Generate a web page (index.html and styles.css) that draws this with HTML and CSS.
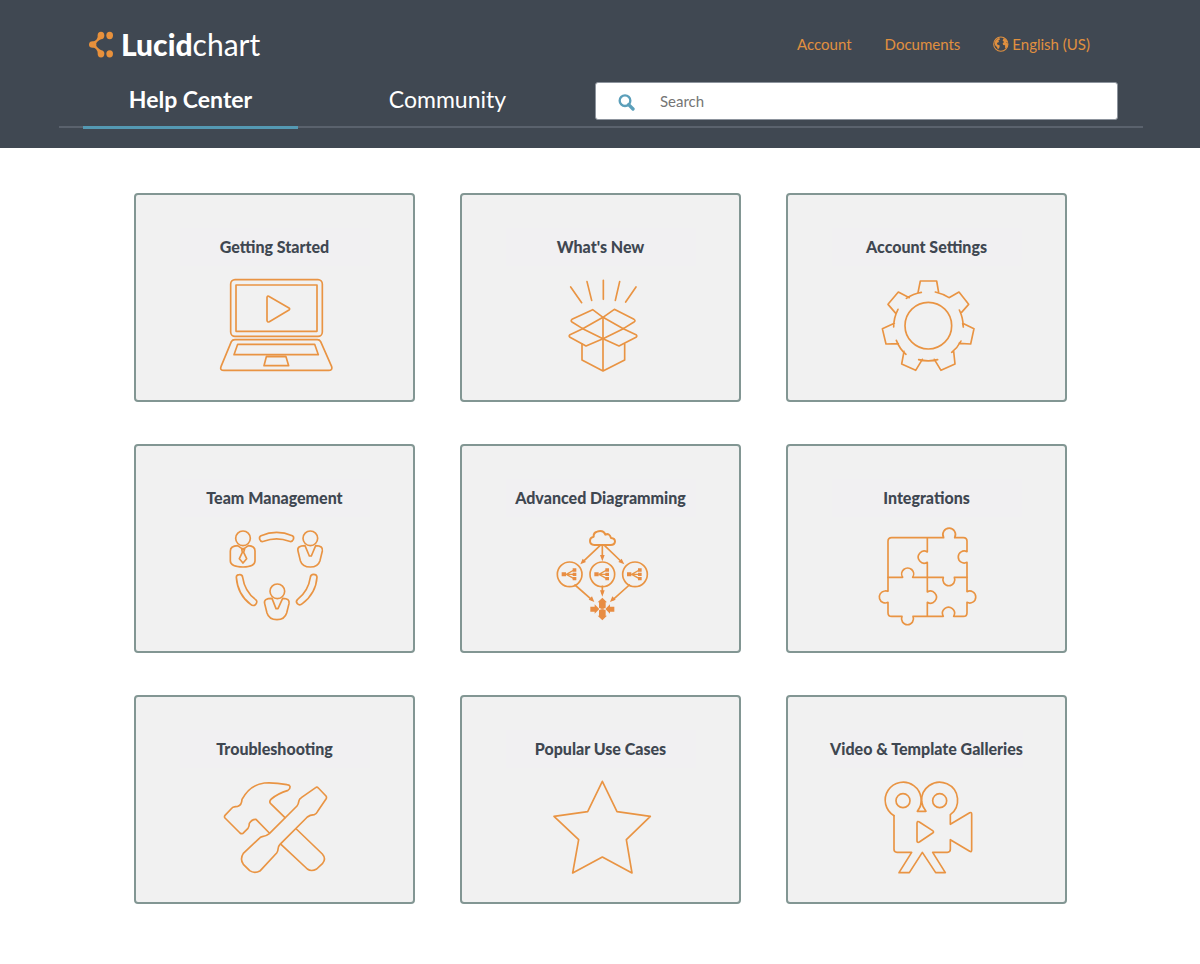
FILE: index.html
```html
<!DOCTYPE html>
<html lang="en">
<head>
	<meta charset="UTF-8">
	<meta name="viewport" content="width=device-width, initial-scale=1">
	<title>Lucidchart Help Center</title>
	<link rel="stylesheet" href="styles.css">
</head>
<body>
	<header class="header">
		<div class="topbar">
			<a class="logo" href="#">
				<svg class="logo-mark" viewBox="0 0 72 80" aria-hidden="true">
					<ellipse cx="36" cy="13" rx="10" ry="11"/>
					<ellipse cx="62" cy="13" rx="10" ry="11"/>
					<ellipse cx="36" cy="68" rx="10" ry="11"/>
					<ellipse cx="62" cy="68" rx="10" ry="11"/>
					<ellipse cx="11" cy="40" rx="11" ry="10"/>
					<path d="M13 31Q24 29 27 14L38 23Q24 30 20 40Q24 51 38 58L27 67Q24 52 13 49Z"/>
				</svg>
				<span class="logo-text"><b>Lucid</b>chart</span>
			</a>
			<div class="links">
				<a href="#">Account</a>
				<a href="#">Documents</a>
				<button class="lang" type="button">
					<svg class="globe" viewBox="0 0 45 45" aria-hidden="true">
						<circle cx="22" cy="23" r="20" fill="none" stroke="currentColor" stroke-width="3"/>
						<path d="M4 19L8 11L17 5L20 9L15 13L17 17L12 19L11 23L19 27L18 32L14 38L11 31L6 26Z"/>
						<path d="M30 6L37 10L41 17L37 18L42 22L41 30L36 35L34 33L34 26L29 25L27 21L31 17L27 13Z"/>
					</svg>
					English (US)
				</button>
			</div>
		</div>
		<div class="navbar">
			<nav class="tabs">
				<a class="tab active" href="#">Help Center</a>
				<a class="tab" href="#">Community</a>
			</nav>
			<form class="search">
				<label for="query" aria-label="Search">
					<svg class="search-icon" viewBox="0 0 51 51" aria-hidden="true">
						<circle cx="21" cy="20" r="16" fill="none" stroke="currentColor" stroke-width="7"/>
						<path d="M32 32L45 45" stroke="currentColor" stroke-width="10" stroke-linecap="round"/>
					</svg>
				</label>
				<input type="search" id="query" placeholder="Search">
			</form>
		</div>
	</header>

	<main class="grid">
		<a class="tile" href="#">
			<h2>Getting Started</h2>
			<svg class="icon" viewBox="252 270 363 312" aria-hidden="true">
				<rect x="302" y="284" width="275" height="170" rx="13"/>
				<rect x="318" y="300" width="243" height="139"/>
				<path d="M411 337Q412 332 416 334L477 369Q481 372 477 375L418 410Q412 413 411 406Z"/>
				<path d="M315 464H562Q569 464 572 470L605 545Q608 556 596 556H282Q269 556 273 545L304 470Q307 464 315 464Z"/>
				<path d="M323 478H554L565 509H312ZM409 515H468L476 542H402Z"/>
			</svg>
		</a>
		<a class="tile" href="#">
			<h2>What's New</h2>
			<svg class="icon" viewBox="0 135 363 312" aria-hidden="true">
				<path d="M92 171L125 218M141 155L155 211M190 151V208M239 155L226 211M288 171L257 216"/>
				<path d="M189 262L158 239L96 268Q91 272 96 276L128 296L189 262L223 238L282 268Q288 272 282 276L250 296Z"/>
				<path d="M128 296L90 314Q85 318 90 322L138 348L189 326L237 348L288 322Q293 318 288 314L250 296M128 296L189 326L250 296"/>
				<path d="M189 262V422M126 342V390L189 423L254 390V342"/>
			</svg>
		</a>
		<a class="tile" href="#">
			<h2>Account Settings</h2>
			<svg class="icon" viewBox="18 135 363 312" aria-hidden="true">
				<circle cx="205" cy="287" r="70"/>
				<path d="M174 188L181 153H230L236 188M226 186Q248 191 267 203L297 186L326 223L302 250M298 240Q309 262 310 291L308 280L342 296L332 342L297 340M303 333Q293 353 275 367M281 364L285 402L243 421L223 388M233 389Q205 396 176 389M187 388L167 421L125 402L132 364M138 373Q119 357 109 331M115 341L78 342L67 296L103 280M101 291Q101 263 114 238M108 251L84 223L115 186L148 203M139 205Q160 191 184 187"/>
			</svg>
		</a>
		<a class="tile" href="#">
			<h2>Team Management</h2>
			<svg class="icon" viewBox="42 138 363 312" aria-hidden="true">
				<circle cx="129" cy="175" r="22"/>
				<path d="M113 197Q91 198 91 213V243Q91 260 129 261Q165 260 165 243V213Q165 198 145 197L129 208ZM125 206H134L131 217L140 236L129 249L118 236L127 217Z"/>
				<circle cx="331" cy="175" r="22"/>
				<path d="M315 197Q290 197 294 213L301 242Q307 261 331 261Q354 261 360 242L367 213Q370 197 347 197L334 228H328Z"/>
				<circle cx="232" cy="334" r="22"/>
				<path d="M216 355Q190 355 194 371L201 399Q207 419 231 419Q254 419 260 399L267 371Q270 355 248 355L234 386H228Z"/>
				<path d="M183 167Q230 147 277 167Q283 170 280 178Q276 187 268 184Q230 169 191 184Q182 187 179 178Q177 170 183 167Z"/>
				<path d="M109 292Q109 284 118 284Q127 283 128 292Q134 334 167 359Q174 365 167 373Q160 380 152 373Q113 344 109 292Z"/>
				<path d="M351 291Q350 283 341 283Q332 283 331 292Q325 333 293 358Q286 364 292 371Q299 378 307 371Q348 340 351 291Z"/>
			</svg>
		</a>
		<a class="tile" href="#">
			<h2>Advanced Diagramming</h2>
			<svg class="icon" viewBox="90 138 363 312" aria-hidden="true">
				<defs>
					<g id="node">
						<circle r="37" stroke-width="5"/>
						<path d="M-10 0L13 -13M-10 0H13M-10 0L13 13" stroke-width="4"/>
						<path class="solid" d="M-24 -6H-11V6H-24ZM9 -18H20V-8H9ZM9 -5H20V5H9ZM9 8H20V18H9Z"/>
					</g>
				</defs>
				<path d="M253 195Q240 194 240 183Q240 172 251 170Q250 158 261 155Q280 149 286 164Q298 158 303 174Q315 175 315 185Q314 195 302 195Z" stroke-width="6"/>
				<path d="M270 197L220 244M277 197V232M284 197L332 243M195 315L245 359M277 319V340M358 315L309 359"/>
				<path class="solid" d="M211 253L218 236L228 246ZM270 225H284L277 244ZM343 253L325 246L335 236ZM253 366L236 359L246 349ZM270 331H284L277 350ZM300 366L307 349L317 359Z"/>
				<use href="#node" x="179" y="283"/>
				<use href="#node" x="277" y="283"/>
				<use href="#node" x="375" y="283"/>
				<path class="solid" d="M277 353L291 367H287V383L277 388L267 383V367H263ZM277 421L291 407H287V391L277 386L267 391V407H263ZM268 387L254 373V380H241V395H254V401ZM286 387L300 373V380H313V395H300V401Z"/>
			</svg>
		</a>
		<a class="tile" href="#">
			<h2>Integrations</h2>
			<svg class="icon" viewBox="18 138 363 312" aria-hidden="true">
				<path d="M202 173H95Q84 173 84 184V334Q79 332 74 333A18 18 0 1 0 84 367V398Q84 409 95 409H126A18 18 0 1 0 159 409H250A18 18 0 1 1 281 409H310Q321 409 321 398V367A18 18 0 1 0 321 335V247A18 18 0 1 1 321 215V184Q321 173 310 173H284A19 19 0 1 0 251 173H202V216A18 18 0 1 0 202 247V336A18 18 0 1 1 202 367V409"/>
				<path d="M84 292H128A18 18 0 1 1 158 292H250A18 18 0 1 0 283 292H321"/>
			</svg>
		</a>
		<a class="tile" href="#">
			<h2>Troubleshooting</h2>
			<svg class="icon" viewBox="42 123 363 312" aria-hidden="true">
				<path d="M255 245L212 203Q206 196 214 189Q232 173 264 163Q271 160 270 151Q269 147 261 146Q224 139 193 141Q150 146 126 190Q125 208 113 211Q99 212 96 216L75 238Q72 242 75 246L120 291Q126 296 131 290L144 277Q148 272 148 262Q156 249 168 250L208 291"/>
				<path d="M289 279L367 354Q379 368 368 382L350 399Q334 408 322 399L243 325"/>
				<path d="M187 302Q198 301 208 293L291 210Q295 206 297 194Q298 188 304 185L347 155Q351 152 355 156L378 180Q381 184 378 189L353 226Q348 235 343 236Q329 237 322 243L240 325Q234 331 234 340Q234 346 230 351L181 404Q164 414 149 404L130 385Q119 369 130 352L177 308Q181 303 187 302Z"/>
			</svg>
		</a>
		<a class="tile" href="#">
			<h2>Popular Use Cases</h2>
			<svg class="icon" viewBox="30 123 363 312" aria-hidden="true">
				<path d="M217 136L261 227L361 241L289 311L306 411L217 363L128 411L146 311L72 241L173 227Z"/>
			</svg>
		</a>
		<a class="tile" href="#">
			<h2>Video &amp; Template Galleries</h2>
			<svg class="icon" viewBox="138 123 363 312" aria-hidden="true">
				<circle cx="249" cy="194" r="21"/>
				<circle cx="359" cy="194" r="21"/>
				<path d="M222 239A54 54 0 1 1 292 226H318Q307 213 305 197Q303 213 292 226"/>
				<path d="M305 197A54 54 0 1 1 391 236V265L449 230Q455 228 455 234V342Q455 349 449 346L391 311V340Q391 349 382 349H338L376 410H347L307 349L268 410H237L275 349H231Q222 349 222 340V239"/>
				<path d="M291 261Q292 254 298 258L338 284Q343 288 338 291L298 318Q292 321 291 315Z"/>
			</svg>
		</a>
	</main>
</body>
</html>
```
FILE: styles.css
```css
*{margin:0;padding:0;box-sizing:border-box;}
body{font-family:Lato,"Liberation Sans",sans-serif;background-color:#fff;color:#3f4751;}
a{color:inherit;text-decoration:none;}

/* header */
.header{background-color:#404852;color:#fff;padding:20px 57px 20px 59px;}
.topbar{display:flex;justify-content:space-between;align-items:center;height:48px;padding:0 53px 0 30px;}
.logo{display:flex;align-items:center;gap:8px;}
.logo-mark{width:24px;height:27px;fill:#e8913c;}
.logo-text{font-size:30px;line-height:36px;font-weight:400;}
.logo-text b{font-weight:900;}
.links{display:flex;align-items:center;gap:33px;color:#e0903f;font-size:15px;line-height:20px;}
.lang{display:flex;align-items:center;gap:3px;border:0;background:none;color:inherit;font:inherit;cursor:pointer;}
.globe{width:16px;height:16px;fill:currentColor;}

.navbar{display:flex;align-items:flex-start;height:60px;padding:0 25px 0 24px;border-bottom:2px solid #5a626d;}
.tabs{display:flex;gap:42px;}
.tab{width:215px;height:61px;padding-top:14px;text-align:center;font-size:23px;line-height:34px;}
.tab.active{font-weight:700;border-bottom:3px solid #5499b3;}
.search{flex:1;display:flex;align-items:center;height:38px;margin:14px 0 0 40px;background-color:#fff;border:1px solid #8d949d;border-radius:3px;}
.search label{padding:2px 25px 0 22px;}
.search-icon{display:block;width:17px;height:17px;color:#5b9fba;}
.search input{flex:1;min-width:0;height:100%;border:0;outline:0;background:none;font:15px/20px Lato,sans-serif;color:#3f4751;}
.search input::placeholder{color:#757575;}

/* tiles */
.grid{display:grid;grid-template-columns:repeat(3,1fr);gap:42px 45px;padding:45px 133px 60px 134px;}
.tile{display:flex;flex-direction:column;align-items:center;height:209px;padding-top:33px;background-color:#f1f1f1;border:2px solid #829693;border-radius:4px;}
.tile h2{min-width:190px;padding:9px 0;background-color:#f1f0f2;text-align:center;font-size:16px;line-height:20px;font-weight:900;}
.icon{width:121px;height:104px;margin-top:9px;fill:none;stroke:#e99443;stroke-width:5;stroke-linejoin:round;stroke-linecap:round;}
.icon .solid{fill:#e88d43;stroke:none;}

@media (max-width:900px){
	.navbar{flex-wrap:wrap;height:auto;}
	.grid{grid-template-columns:1fr;padding:30px;}
}
```
